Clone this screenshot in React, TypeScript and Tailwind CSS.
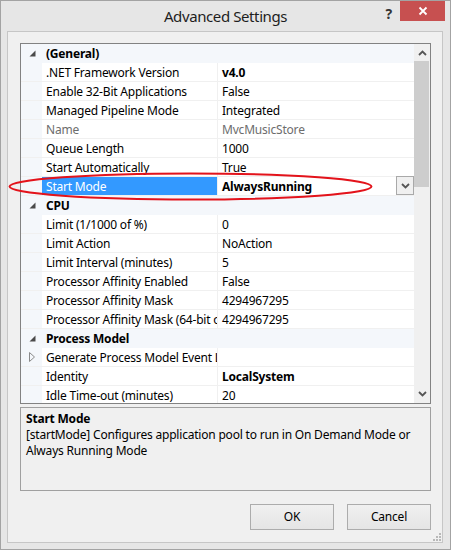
import React from "react";

type Row =
  | { kind: "cat"; label: string }
  | {
      kind: "prop";
      name: string;
      value: string;
      bold?: boolean;
      gray?: boolean;
      selected?: boolean;
      dropdown?: boolean;
      expandable?: boolean;
    };

const rows: Row[] = [
  { kind: "cat", label: "(General)" },
  { kind: "prop", name: ".NET Framework Version", value: "v4.0", bold: true },
  { kind: "prop", name: "Enable 32-Bit Applications", value: "False" },
  { kind: "prop", name: "Managed Pipeline Mode", value: "Integrated" },
  { kind: "prop", name: "Name", value: "MvcMusicStore", gray: true },
  { kind: "prop", name: "Queue Length", value: "1000" },
  { kind: "prop", name: "Start Automatically", value: "True" },
  { kind: "prop", name: "Start Mode", value: "AlwaysRunning", bold: true, selected: true, dropdown: true },
  { kind: "cat", label: "CPU" },
  { kind: "prop", name: "Limit (1/1000 of %)", value: "0" },
  { kind: "prop", name: "Limit Action", value: "NoAction" },
  { kind: "prop", name: "Limit Interval (minutes)", value: "5" },
  { kind: "prop", name: "Processor Affinity Enabled", value: "False" },
  { kind: "prop", name: "Processor Affinity Mask", value: "4294967295" },
  { kind: "prop", name: "Processor Affinity Mask (64-bit option)", value: "4294967295" },
  { kind: "cat", label: "Process Model" },
  { kind: "prop", name: "Generate Process Model Event Log Entry", value: "", expandable: true },
  { kind: "prop", name: "Identity", value: "LocalSystem", bold: true },
  { kind: "prop", name: "Idle Time-out (minutes)", value: "20" },
];

function Collapse() {
  return (
    <svg width="7" height="7" viewBox="0 0 7 7" className="block">
      <polygon points="0.5,6.5 6.5,6.5 6.5,0.5" fill="#4a4a4a" />
    </svg>
  );
}

function Expand() {
  return (
    <svg width="6" height="10" viewBox="0 0 6 10" className="block">
      <polygon points="0.5,0.5 5.5,5 0.5,9.5" fill="none" stroke="#8a8a8a" strokeWidth="1" />
    </svg>
  );
}

function Chevron({ down }: { down?: boolean }) {
  return (
    <svg width="9" height="6" viewBox="0 0 9 6" className="block">
      <polyline
        points={down ? "1,1 4.5,4.5 8,1" : "1,5 4.5,1.5 8,5"}
        fill="none"
        stroke="#555"
        strokeWidth="1.8"
      />
    </svg>
  );
}

function GridRow({ row }: { row: Row }) {
  if (row.kind === "cat") {
    return (
      <div className="flex h-[19px] items-center bg-[#f4f7fb] border-b border-[#f4f7fb]">
        <div className="w-[21px] flex justify-end pr-[6px] pt-[1px]">
          <Collapse />
        </div>
        <div className="pl-[4px] font-bold text-[#000] leading-[18px] pt-[2px]">{row.label}</div>
      </div>
    );
  }
  return (
    <div className="flex h-[19px] border-b border-[#f0f0f0]">
      <div className="w-[21px] bg-[#f4f7fb] flex items-center justify-end pr-[7px]">
        {row.expandable ? <Expand /> : null}
      </div>
      <div
        className={`w-[176px] shrink-0 overflow-hidden whitespace-nowrap pl-[4px] leading-[20px] border-r border-[#f0f0f0] ${
          row.selected ? "bg-[#3399ff] text-white" : row.gray ? "text-[#6d6d6d]" : "text-black"
        }`}
      >
        {row.name}
      </div>
      <div className="flex-1 flex items-center min-w-0">
        <div
          className={`flex-1 self-stretch pl-[4px] leading-[20px] whitespace-nowrap overflow-hidden ${
            row.bold ? "font-bold" : ""
          } ${row.gray ? "text-[#6d6d6d]" : "text-black"}`}
        >
          {row.value}
        </div>
        {row.dropdown ? (
          <div className="w-[18px] h-[19px] -mt-[1px] border border-[#a9a9a9] bg-[#f0f0f0] flex items-center justify-center">
            <Chevron down />
          </div>
        ) : null}
      </div>
    </div>
  );
}

export default function App() {
  return (
    <div className="relative w-[451px] h-[550px] border border-[#a3a3a3] bg-[#e6e6e6] flex flex-col font-['Noto_Sans',sans-serif] text-[12px] tracking-[-0.2px] text-black overflow-hidden">
      {/* title bar */}
      <div className="relative h-[30px] flex items-center justify-center shrink-0">
        <div className="text-[15px] tracking-[-0.4px] text-[#1e1e1e] mt-[1px]">Advanced Settings</div>
        <div className="absolute right-[58px] top-[2px] text-[14px] font-bold text-[#333]">?</div>
        <div className="absolute right-[5px] top-0 w-[45px] h-[20px] bg-[#c75050] flex items-center justify-center">
          <svg width="10" height="10" viewBox="0 0 10 10">
            <path d="M1.5 1.5 L8.5 8.5 M8.5 1.5 L1.5 8.5" stroke="#fff" strokeWidth="1.8" />
          </svg>
        </div>
      </div>

      {/* client area */}
      <div className="flex-1 ml-[6px] mr-[7px] mb-[6px] border border-[#c6c6c6] bg-[#f0f0f0] flex flex-col pl-[12px] pr-[11px] pt-[11px]">
        {/* property grid */}
        <div className="h-[361px] border border-[#828282] bg-white flex shrink-0">
          <div className="flex-1 min-w-0 overflow-hidden">
            {rows.map((r, i) => (
              <GridRow key={i} row={r} />
            ))}
          </div>
          <div className="w-[16px] bg-[#f0f0f0] flex flex-col">
            <div className="h-[17px] flex items-center justify-center">
              <Chevron />
            </div>
            <div className="h-[126px] mr-[1px] bg-[#cdcdcd]" />
            <div className="flex-1" />
            <div className="h-[18px] flex items-center justify-center">
              <Chevron down />
            </div>
          </div>
        </div>

        {/* description */}
        <div className="mt-[3px] h-[84px] border border-[#a0a0a0] px-[5px] pt-[3px] leading-[16px] shrink-0">
          <div className="font-bold">Start Mode</div>
          <div>[startMode] Configures application pool to run in On Demand Mode or Always Running Mode</div>
        </div>

        {/* buttons */}
        <div className="mt-[13px] flex justify-end gap-[13px]">
          <button className="w-[84px] h-[26px] border border-[#acacac] bg-gradient-to-b from-[#f0f0f0] to-[#e5e5e5] text-[12px]">
            OK
          </button>
          <button className="w-[84px] h-[26px] border border-[#acacac] bg-gradient-to-b from-[#f0f0f0] to-[#e5e5e5] text-[12px]">
            Cancel
          </button>
        </div>
      </div>

      {/* resize grip */}
      <svg className="absolute right-[9px] bottom-[8px]" width="8" height="8" viewBox="0 0 8 8">
        <rect x="6" y="0" width="2" height="2" fill="#b8b8b8" />
        <rect x="3" y="3" width="2" height="2" fill="#b8b8b8" />
        <rect x="6" y="3" width="2" height="2" fill="#b8b8b8" />
        <rect x="0" y="6" width="2" height="2" fill="#b8b8b8" />
        <rect x="3" y="6" width="2" height="2" fill="#b8b8b8" />
        <rect x="6" y="6" width="2" height="2" fill="#b8b8b8" />
      </svg>

      {/* red annotation ellipse */}
      <svg className="absolute left-0 top-0 pointer-events-none" width="451" height="550">
        <ellipse cx="189.5" cy="185.5" rx="181" ry="13" fill="none" stroke="#e3131b" strokeWidth="2" />
      </svg>
    </div>
  );
}
